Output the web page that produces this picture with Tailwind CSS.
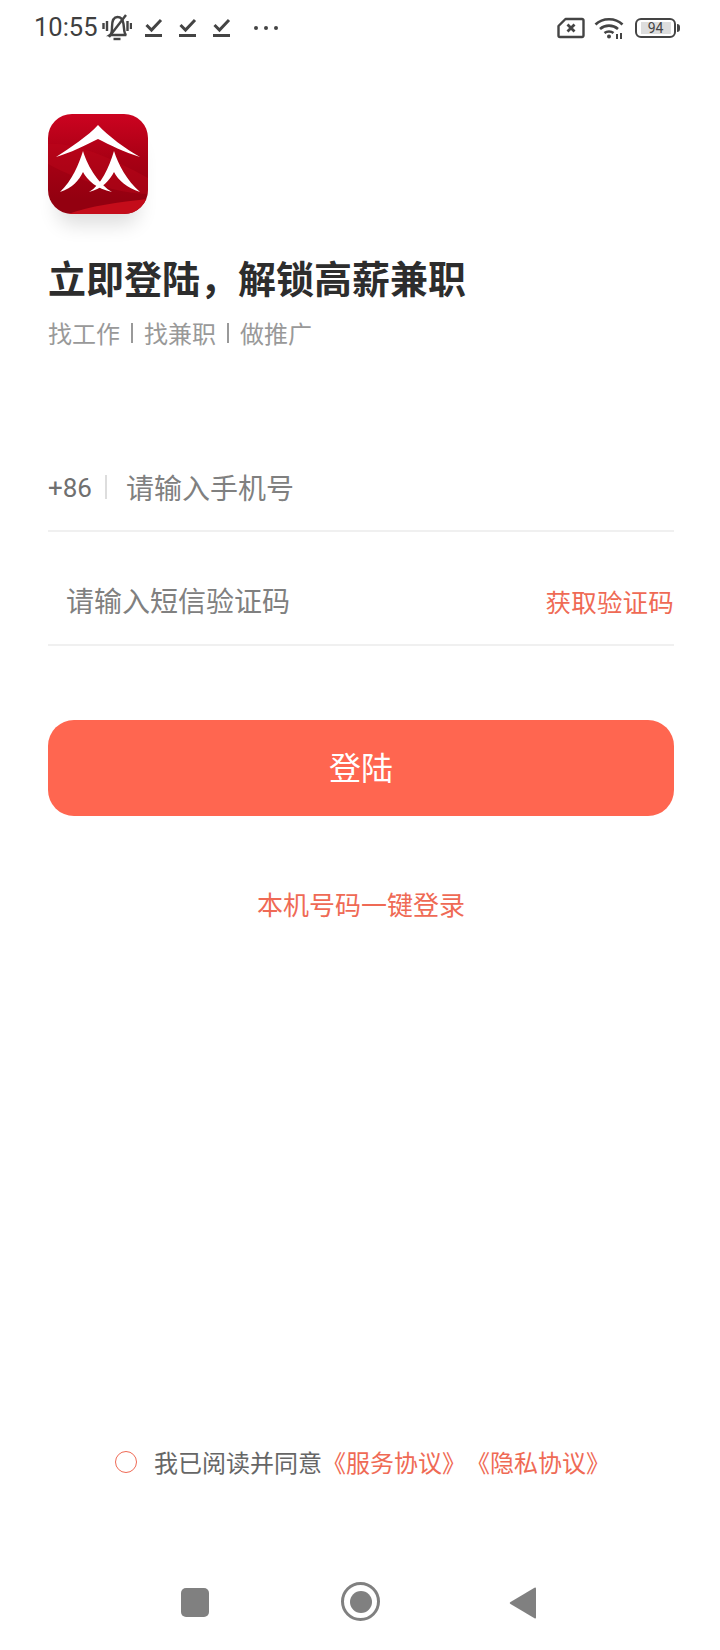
<!DOCTYPE html>
<html lang="zh-CN">
<head>
    <meta charset="UTF-8">
    <meta name="viewport" content="width=device-width, initial-scale=1.0">
    <title>登陆</title>
    <script src="https://cdn.jsdelivr.net/npm/@tailwindcss/browser@4"></script>
</head>
<body class="bg-white font-['Noto_Sans_CJK_SC','Noto_Sans',sans-serif]">
    <div class="w-[720px] h-[1650px] flex flex-col overflow-hidden">
        <!-- Status bar -->
        <div class="h-[56px] shrink-0 flex items-center text-[#3f3f3f]">
            <span class="ml-[34px] font-['Roboto',sans-serif] text-[25.500px] leading-none">10:55</span>
            <svg class="ml-[4px]" width="30" height="28" viewBox="0 0 30 28" fill="none" stroke="#444" stroke-width="2.400">
                <path d="M8 21c1.500-1 2-3 2-8 0-6 2-10 5.500-10s5.500 3 6 7l.8 7c.2 2 1 3.500 2 4z" />
                <path d="M11.500 25h7" />
                <path d="M7 23L24 1" />
                <path d="M1.500 9v6M5 7v10M25.500 7v10M29 9v6" />
            </svg>
            <svg class="ml-[13px]" width="18" height="20" viewBox="0 0 18 20" fill="none" stroke="#444">
                <path d="M1.500 7l5 5L16 2" stroke-width="3" />
                <path d="M0 17.500h17" stroke-width="3" />
            </svg>
            <svg class="ml-[16px]" width="18" height="20" viewBox="0 0 18 20" fill="none" stroke="#444">
                <path d="M1.500 7l5 5L16 2" stroke-width="3" />
                <path d="M0 17.500h17" stroke-width="3" />
            </svg>
            <svg class="ml-[16px]" width="18" height="20" viewBox="0 0 18 20" fill="none" stroke="#444">
                <path d="M1.500 7l5 5L16 2" stroke-width="3" />
                <path d="M0 17.500h17" stroke-width="3" />
            </svg>
            <div class="ml-[23px] flex gap-[6px]">
                <span class="w-[4px] h-[4px] rounded-full bg-[#444]"></span>
                <span class="w-[4px] h-[4px] rounded-full bg-[#444]"></span>
                <span class="w-[4px] h-[4px] rounded-full bg-[#444]"></span>
            </div>
            <!-- sim / wifi / battery -->
            <svg class="ml-auto" width="28" height="22" viewBox="0 0 28 22" fill="none" stroke="#444" stroke-width="2.400">
                <path d="M8.500 2H25a1.500 1.500 0 0 1 1.500 1.500v15A1.500 1.500 0 0 1 25 20H3a1.500 1.500 0 0 1-1.500-1.500V9z" stroke-linejoin="round" />
                <path d="M10.500 7.500l7 7M17.500 7.500l-7 7" stroke-width="2.800" />
            </svg>
            <svg class="ml-[9px]" width="31" height="24" viewBox="0 0 31 24" fill="none" stroke="#444" stroke-width="2.600">
                <path d="M1.500 8.500C8.500 1.500 21.500 1.500 28.500 8.500" />
                <path d="M6 13c5-4.500 13-4.500 18 0" />
                <path d="M10.500 17c2.500-2 6.500-2 9 0" />
                <circle cx="15" cy="20.500" r="2" fill="#444" stroke="none" />
                <path d="M23 23v-5M27 23v-6" stroke-width="2" />
            </svg>
            <div class="ml-[10px] mr-[40px] flex items-center">
                <div class="w-[41px] h-[20px] rounded-[6px] border-2 border-[#444] flex items-center justify-center">
                    <span class="w-[30px] h-[12px] bg-[#ddd] flex items-center justify-center font-['Roboto',sans-serif] text-[14px] leading-none text-[#444]">94</span>
                </div>
                <span class="ml-[1px] w-[3px] h-[8px] rounded-r-sm bg-[#444]"></span>
            </div>
        </div>

        <!-- Main -->
        <main class="flex-1 flex flex-col px-[48px] w-[722px]">
            <!-- App logo -->
            <div class="mt-[58px] w-[100px] h-[100px] rounded-[24px] overflow-hidden shrink-0 shadow-[0_20px_20px_-10px_rgba(0,0,0,0.14)]">
                <svg width="100" height="100" viewBox="0 0 100 100">
                    <defs>
                        <linearGradient id="logoBg" x1="0" y1="0" x2="0" y2="1">
                            <stop offset="0" stop-color="#cc0320" />
                            <stop offset="0.45" stop-color="#a80014" />
                            <stop offset="0.85" stop-color="#930010" />
                        </linearGradient>
                    </defs>
                    <rect width="100" height="100" fill="url(#logoBg)" />
                    <path d="M0 30C25 28 60 42 100 64V80C70 80 30 66 0 50z" fill="#c40a1e" opacity="0.35" />
                    <path d="M20 100C42 92 70 88 100 85V100z" fill="#c40c1a" />
                    <path d="M50 11C60 22 78 35 92 43C76 38 62 31 50 25C38 31 22 39 8 43C22 34 40 22 50 11z" fill="#fff" />
                    <path d="M35 37C31 50 24 67 12 78C25 74 31 66 35 58C39 66 49 75 64 78C52 71 40 54 35 37z" fill="#fff" />
                    <path d="M66 37C70 50 79 67 92 78C79 74 70 66 66 58C62 66 54 75 41 78C53 71 61 54 66 37z" fill="#fff" />
                </svg>
            </div>

            <h1 class="mt-[36px] text-[38px] leading-[54px] font-bold text-[#2d2d2d] whitespace-nowrap">立即登陆，解锁高薪兼职</h1>
            <p class="mt-[12px] flex items-center text-[24px] leading-[34px] text-[#999] whitespace-nowrap">
                <span>找工作</span>
                <span class="mx-[11px] w-[2px] h-[20px] bg-[#999]"></span>
                <span>找兼职</span>
                <span class="mx-[11px] w-[2px] h-[20px] bg-[#999]"></span>
                <span>做推广</span>
            </p>

            <!-- Phone number -->
            <div class="mt-[97px] w-[626px] h-[85px] pb-[4px] flex items-center border-b-2 border-[#f0f0f0]">
                <span class="mt-[4px] font-['Roboto',sans-serif] text-[26px] text-[#707070]">+86</span>
                <span class="ml-[13px] w-[2px] h-[24px] bg-[#ddd]"></span>
                <span class="ml-[19px] text-[28px] text-[#808080]">请输入手机号</span>
            </div>
            <!-- SMS code -->
            <div class="mt-[27px] w-[626px] h-[87px] pb-[4px] flex items-center border-b-2 border-[#f0f0f0]">
                <span class="ml-[18px] text-[28px] text-[#808080]">请输入短信验证码</span>
                <span class="ml-auto mt-[4px] text-[25.500px] tracking-[0.200px] text-[#ef6a55]">获取验证码</span>
            </div>

            <button class="mt-[74px] w-[626px] h-[96px] shrink-0 rounded-[26px] bg-[#ff6650] text-white text-[32px] pb-[4px]">登陆</button>

            <p class="mt-[68px] w-[626px] text-center text-[26px] leading-[40px] text-[#ef6a55]">本机号码一键登录</p>

            <!-- Agreement -->
            <div class="mt-auto mb-[70px] ml-[67px] flex items-center whitespace-nowrap text-[24px] leading-[36px]">
                <span class="w-[22px] h-[22px] rounded-full border-[1.500px] border-[#ef6a55]"></span>
                <span class="ml-[17px] text-[#666]">我已阅读并同意</span>
                <span class="text-[#ef6a55]">《服务协议》</span>
                <span class="text-[#ef6a55]">《隐私协议》</span>
            </div>
        </main>

        <!-- Nav bar -->
        <div class="h-[100px] shrink-0 flex items-start pt-[32px] text-[#808080]">
            <span class="ml-[181px] mt-[6px] w-[28px] h-[29px] rounded-[5px] bg-[#808080]"></span>
            <span class="ml-[132px] w-[39px] h-[39px] rounded-full border-[3px] border-[#808080] flex items-center justify-center">
                <span class="w-[22px] h-[22px] rounded-full bg-[#808080]"></span>
            </span>
            <svg class="ml-[129px] mt-[4px]" width="28" height="34" viewBox="0 0 28 34" fill="#808080">
                <path d="M27 2.500v29a1 1 0 0 1-1.500.8L1.500 18a1.200 1.200 0 0 1 0-2L25.500 1.700a1 1 0 0 1 1.500.8z" />
            </svg>
        </div>
    </div>
</body>
</html>
